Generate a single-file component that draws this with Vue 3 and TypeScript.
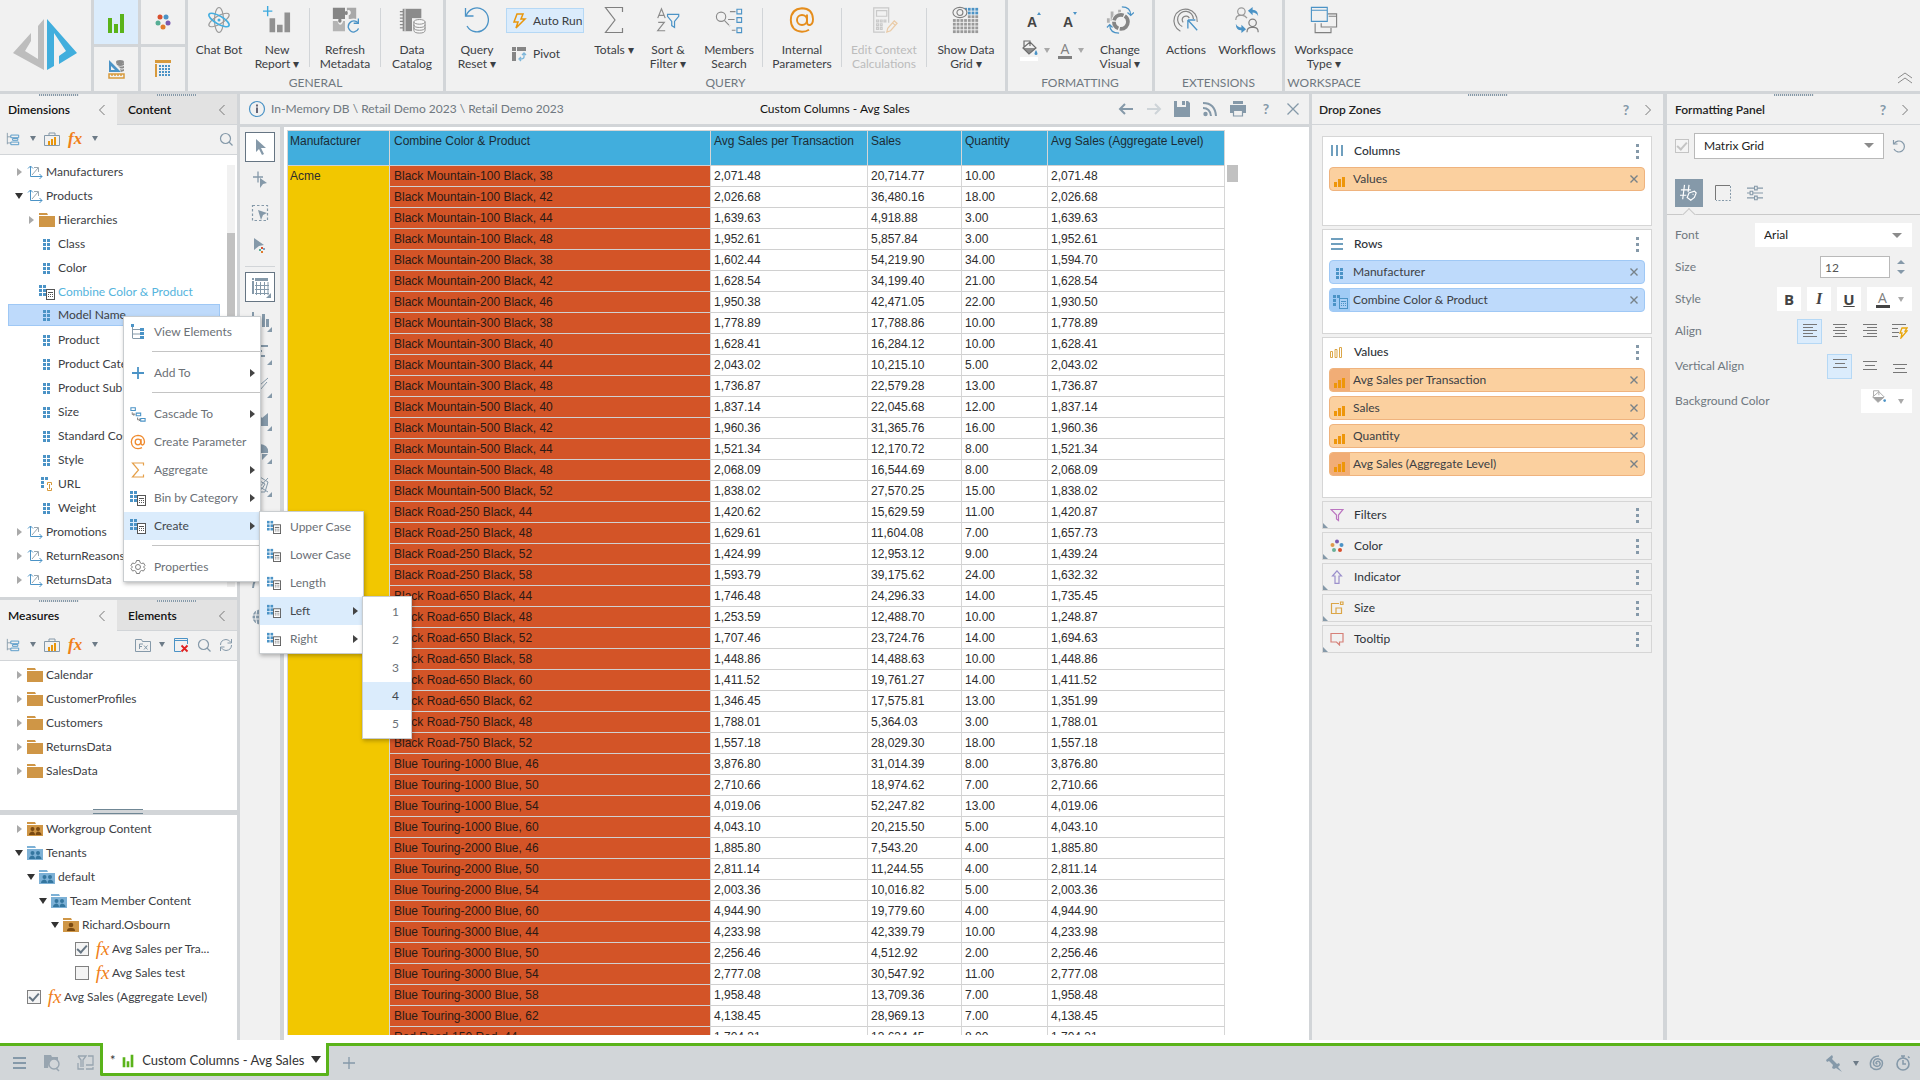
<script setup lang="ts">
import { h, ref, type FunctionalComponent } from 'vue'

const G = '#8599a9'
const B = '#4b93c6'
const D = '#8c8c8c'

const cells = (x: number, y: number, c: number, r: number, s: number, p: number, f: string) => {
  let out = ''
  for (let i = 0; i < c; i++) for (let j = 0; j < r; j++) out += `<rect x="${x + i * p}" y="${y + j * p}" width="${s}" height="${s}" fill="${f}"/>`
  return out
}
const lines = (list: number[][], c: string) =>
  `<path stroke="${c}" d="${list.map(([x1, x2, y]) => `M${x1} ${y}H${x2}`).join('')}"/>`
const people = (c: string) =>
  `<g fill="${c}"><circle cx="5.500" cy="8" r="2"/><circle cx="11" cy="8" r="2"/><path d="M2 14q0-3 3.500-3.500Q8 11 8 14ZM8.500 14q0-3 2.500-3.500 3.500.5 3.500 3.500Z"/></g>`
const calc = (c: string, bg: string) =>
  `<rect x="7.500" y="5.500" width="8" height="10" fill="${bg}" stroke="${c}"/><path stroke="${c}" d="M9 8.500h5"/>` + cells(9, 10, 3, 2, 1, 2, c)
const dim = cells(4, 3, 2, 3, 3, 4, B)
const folder = (c: string) => `<path fill="${c}" d="M0 1h8l1 2H0ZM0 4h16v11H0Z"/>`
const bars = (c: string) => `<path fill="${c}" d="M1 9h3v5H1ZM5 6h3v8H5ZM9 4h3v10H9Z"/>`

const icons: Record<string, [number, string]> = {
  report: [24, `<path fill="#5ab31a" d="M4 8h4v15H4ZM10 14h4v9h-4ZM16 4h4v19h-4Z"/>`],
  dots5: [24, `<circle cx="9" cy="7" r="2.500" fill="#d9502e"/><circle cx="15" cy="7" r="2.500" fill="${B}"/><circle cx="7" cy="13" r="2.500" fill="#57ae95"/><circle cx="17" cy="13" r="2.500" fill="#7a58b0"/><circle cx="12" cy="17" r="2.500" fill="#e07c2c"/>`],
  model: [24, `<path fill="${B}" fill-rule="evenodd" d="M5 3L17 15H5ZM7 9v4h4Z"/><g fill="#8b8b8b"><ellipse cx="16" cy="5" rx="4" ry="2"/><path d="M12 6q4 2 8 0v2q-4 2-7 0ZM14 9q3 1 6 0v2q-3 1-4 0ZM16 12q2 1 4 0v2l-3 1Z"/></g><path fill="#f1f1f1" stroke="#d79a3c" stroke-width="1.500" d="M5 17h15v4H5ZM8 17v2M11 17v2M14 17v2M17 17v2"/>`],
  tabular: [24, `<path fill="#d79a3c" d="M4 3h16v3H4ZM4 7h2v13H4Z"/>` + cells(8, 8, 4, 4, 2, 3, B)],
  atom: [28, `<g fill="none" stroke="#9a9a9a" stroke-width="1.200"><ellipse cx="14" cy="14" rx="4.500" ry="12.500"/><ellipse cx="14" cy="14" rx="4" ry="11.500" transform="rotate(60 14 14)"/><ellipse cx="14" cy="14" rx="4" ry="11.500" transform="rotate(-60 14 14)" stroke="#45aee0" stroke-width="1.600"/></g><circle cx="14" cy="14" r="1.500" fill="#45aee0"/>`],
  newrep: [30, `<path fill="#919191" d="M7 13h6v15H7ZM15 20h6v8h-6ZM23 7h6v21h-6Z"/><path stroke="#3da9de" stroke-width="1.500" d="M0 5.500h10M5 0v11"/>`],
  refmeta: [30, `<path fill="#858585" d="M2 2h13v4q3-2 3 1.500T15 9v5h-4q1 4-1.500 4T8 14H2Z"/><path fill="#a8a8a8" d="M17 2h10v12h-8v-4q3-1 2-4t-4-1Z"/><path fill="#b4b4b4" d="M2 16h5q1 4 3 4t3-4h2v11H2Z"/><g fill="none" stroke="#f1f1f1" stroke-width="5"><circle cx="24" cy="22" r="6"/></g><g fill="none" stroke="${B}" stroke-width="1.400"><path d="M29 18q-3-3-7-1.500-4 2.500-3.500 6.500 2 5 6 5 4-1 5-4"/><path d="M29.300 13.500v5h-5"/></g>`],
  catalog: [30, `<path fill="#8b8b8b" d="M5 3h20v24H5Z"/><path fill="none" stroke="#f1f1f1" d="M7.500 3v24"/><path stroke="#8b8b8b" stroke-width="1.300" d="M2 6h4M2 9.500h4M2 13h4M2 16.500h4M2 20h4M2 23.500h4"/><path fill="#f1f1f1" d="M15 13h16v17H15Z"/><g fill="#f7f7f7" stroke="#8b8b8b"><path d="M17 17v9q0 3 6 3t6-3v-9"/><ellipse cx="23" cy="17" rx="6" ry="2.500"/><path fill="none" d="M17 20q0 3 6 3t6-3M17 23q0 3 6 3t6-3"/></g>`],
  reset: [28, `<g fill="none" stroke="${B}" stroke-width="1.300"><path d="M2.500 2v8h8"/><path d="M3 10A11.500 12 0 1 1 4 20"/></g>`],
  bolt: [16, `<path fill="none" stroke="#e9960b" stroke-width="1.500" d="M6 1h6l-2 5h4L5 15l2-6H3Z"/>`],
  pivot: [16, `<path fill="#858585" d="M1 1h4v4H1ZM6 1h9v4H6ZM1 6h4v9H1Z"/><path fill="none" stroke="#7db6da" stroke-width="1.300" d="M13 7v4q0 2-4 2M11 9l2-2 2 2M10 11l-2 2 2 2"/>`],
  sigma: [28, `<path fill="none" stroke="#808080" stroke-width="1.200" d="M22.500 6V1.500H5.500L15 14 5.500 26.500h17v-4.500"/>`],
  sort: [30, `<g fill="none" stroke="#8b8b8b" stroke-width="1.300"><path d="M4 13L8 3l4 10M5.500 10h5M4.500 17.500H11L4 26.500h8"/></g><path fill="none" stroke="${B}" stroke-width="1.300" d="M14.500 9h12v2l-4.500 5.500V23l-3-2v-4.500L14.500 11Z"/>`],
  members: [30, `<g fill="none" stroke="#8b8b8b" stroke-width="1.200"><circle cx="6.500" cy="11.500" r="5"/><path d="M10 15.500l6 6M16 6h6M14 14.500h8M18 26h4" stroke-dasharray="7 1"/></g><g fill="none" stroke="${B}" stroke-width="1.200"><path d="M23.500 3.500h5v5h-5ZM23.500 12.500h5v5h-5ZM23.500 23.500h5v5h-5Z"/></g>`],
  at: [28, `<g fill="none" stroke="#e58d1c" stroke-width="1.900"><circle cx="14" cy="14" r="5"/><path d="M19 8.500v7q0 4 3 3.500 3-1 3-6Q24.500 2.500 14 2.200 3 3 2.800 14 3 25 14 25.800q4 0 7-2"/></g>`],
  calcedit: [30, `<g fill="none" stroke="#c9c9c9" stroke-width="1.300"><path d="M20 18V2H4v26h12M7 5h11v6H7Z"/><path d="M7 15h2v2H7ZM11 15h2v2h-2ZM15 15h2v2h-2ZM7 19h2v2H7ZM11 19h2v2h-2ZM7 23h2v2H7ZM11 23h2v2h-2Z"/><path stroke="#eacba7" d="M18 28l1-4 7-8 3 2.500-7 8ZM24 18l3 2.500"/></g>`],
  datagrid: [30, cells(13, 2, 4, 2, 3, 4, B) + cells(1, 14, 7, 4, 3, 4, '#9a9a9a') + cells(17, 10, 3, 1, 3, 4, '#9a9a9a') + `<g fill="#f1f1f1" stroke="#808080" stroke-width="1.200"><ellipse cx="8.500" cy="7" rx="7.500" ry="5.500"/><circle cx="8.500" cy="7" r="3.200"/></g>`],
  bucket: [18, `<path fill="#8b8b8b" d="M3 9h13l-7 6Z"/><path fill="none" stroke="#6d6d6d" stroke-width="1.200" d="M3 9l7-6 6 6-7 6ZM4 8V2h6v5"/><path fill="${B}" d="M16 11q3 5 0 5t0-5Z"/>`],
  bucketS: [18, `<path fill="#a3a3a3" d="M3 9h13l-7 6Z"/><path fill="none" stroke="#a3a3a3" d="M3 9l7-6 6 6-7 6ZM4 8V2h6v5"/><circle cx="16.500" cy="13" r="1.500" fill="${B}"/>`],
  visual: [30, `<path fill="#b1b1b1" d="M1 13h3v5H1ZM5 6h3v10H5ZM9 9h3v5H9ZM13 4h3v6h-3Z"/><g fill="none"><circle cx="16" cy="17" r="7.500" stroke="#f1f1f1" stroke-width="6"/><circle cx="16" cy="17" r="7.500" stroke="#858585" stroke-width="4" stroke-dasharray="13 1.500 9 1.500"/><path stroke="${B}" stroke-width="1.300" d="M17 1q9.500 0 9.500 9M23 7l3.500 3L30 7M4 20q0 9 10 9M1 23l3-3 3 3"/></g>`],
  actions: [30, `<g fill="none" stroke="#858585" stroke-width="1.300"><path d="M9 27A12.500 12.500 0 1 1 27 17"/><path d="M11 22A8.500 8.500 0 1 1 23 14"/><path d="M12 17.500A4 4 0 1 1 18.500 13"/></g><path fill="none" stroke="${B}" stroke-width="1.400" d="M17 15v9M17 15h8M17 15l10 11"/>`],
  flows: [30, `<g fill="none" stroke="#9a9a9a" stroke-width="1.300"><circle cx="9" cy="6" r="4"/><path d="M3 15q0-5 5-5h2q3 0 5 3"/><g stroke="#808080"><circle cx="21" cy="18" r="4"/><path d="M15 28q0-5 5-5h2q5 0 5 5"/></g></g><path fill="${B}" d="M16 5l5-4v3q6 0 6 7-2-4-6-4v3ZM14 25l-5 4v-3q-6 0-6-7 2 4 6 4v-3Z"/>`],
  wspace: [30, `<g fill="none" stroke="#808080" stroke-width="1.200"><path d="M19 8.500h9.500v14H12v-4M20 11h8M5.500 18.500v10h17v-5"/></g><path fill="none" stroke="${B}" stroke-width="1.200" d="M1.500 1.500h17v15h-17ZM1.500 4.500h17"/>`],
  chevUp: [16, `<path fill="none" stroke="${D}" d="M1 8l7-5 7 5M1 13l7-5 7 5"/>`],
  left: [14, `<path fill="none" stroke="#777" d="M9.500 2L4.500 7l5 5"/>`],
  right: [14, `<path fill="none" stroke="#777" d="M4.500 2l5 5-5 5"/>`],
  hier: [16, `<g fill="none" stroke="${G}"><path d="M1.500 1v13M1.500 5.500h4M1.500 12.500h4"/><g stroke="${B}"><path d="M5.500 3.500h9v3h-9ZM5.500 11.500h9v3h-9ZM7.500 7.500h6v2h-6Z"/></g></g>`],
  brief: [16, `<path fill="none" stroke="${G}" d="M.5 4.500h15v10H.5ZM5 4V2h6v2"/><path fill="#e9960b" d="M4 10h2v4H4ZM7 8h2v6H7ZM10 6h2v8h-2Z"/>`],
  search: [14, `<circle cx="6.500" cy="6.500" r="5" fill="none" stroke="${G}" stroke-width="1.200"/><path stroke="${G}" stroke-width="1.200" d="M10 10l3.500 3.500"/>`],
  cycle: [14, `<g fill="none" stroke="${G}"><path d="M1.500 7q0-5 5.500-5.500 3 0 5 3M12.500 7q0 5-5.500 5.500-3 0-5-3M12.500 1v4h-4M1.500 13V9h4"/></g>`],
  fxfold: [16, `<path fill="none" stroke="${G}" d="M.5 14.500v-12h6l1 2h8v10Z"/><path fill="none" stroke="${G}" d="M4.500 12V7H8M4.500 9.500H7M9 8.500l3.500 4M12.500 8.500l-3.500 4"/>`],
  boxx: [16, `<path fill="none" stroke="${B}" d="M8 14.500H1.500v-13h13V7M1.500 3.500h13"/><path stroke="#e02020" stroke-width="1.800" d="M8.500 8.500l6 6M14.500 8.500l-6 6"/>`],
  axes: [16, `<g fill="none" stroke="${B}"><path d="M3.500 2v10.500H15M1 4.500L3.500 2 6 4.500M12.500 10l2.500 2.500-2.500 2.500"/></g><path fill="none" stroke="#9aa7b0" d="M5 11l6-7M7 3.500h4.500V8"/>`],
  folder: [16, folder('#cf9646')],
  workgroup: [16, folder('#cf9646') + people('#7a4a12')],
  tenant: [16, folder('#7db1d6') + people('#34769f')],
  user: [16, folder('#cf9646') + `<g fill="#7a4a12"><circle cx="8" cy="8" r="2.300"/><path d="M4 14q0-3 3-3h2q3 0 3 3Z"/></g>`],
  dim: [16, dim],
  dimcalc: [16, cells(0, 1, 2, 1, 3, 4, B) + cells(0, 5, 2, 2, 3, 4, B) + calc('#555', '#fff')],
  dimlink: [16, cells(2, 1, 2, 1, 3, 4, B) + cells(2, 5, 1, 2, 3, 4, B) + `<path fill="none" stroke="#d79a3c" d="M8.500 9V6.500h4V9M8.500 12v2.500h4V12M10.500 8v5"/>`],
  elements: [16, `<path fill="none" stroke="${G}" d="M2.500 2v12M2.500 5.500h8M2.500 10h8M2.500 14.500h8"/><path fill="${B}" d="M1 0h3v3H1ZM10 4h4v3h-4ZM10 8h4v3h-4ZM10 12h4v3h-4Z"/>`],
  plus: [16, `<path stroke="${B}" stroke-width="1.800" d="M2 8h12M8 2v12"/>`],
  cascade: [18, `<g fill="none" stroke="${B}" stroke-width="1.200"><path d="M1 2h5v3H1ZM7 8h5v3H7ZM12 14h5v3h-5Z"/></g><path fill="none" stroke="#777" d="M2.500 7v2.500H5M4 8l1.500 1.500L4 11M8.500 13v2.500H11M10 14l1.500 1.500L10 17"/>`],
  atS: [16, `<g fill="none" stroke="#ef8a2e" stroke-width="1.300"><circle cx="8" cy="8" r="2.800"/><path d="M11 5v4q0 2 1.500 2T14.500 8Q14 1.500 8 1.300 1.500 2 1.300 8 2 14.500 8 14.700q2 0 4-1"/></g>`],
  sigmaS: [16, `<path fill="none" stroke="#e5a04a" stroke-width="1.200" d="M13.500 3.500V1H2.500l6 7-6 7h11v-2.500"/>`],
  gear: [16, `<g fill="none" stroke="#808080"><circle cx="8" cy="8" r="2.500"/><path d="M6.500 1.500h3l.5 2 1.500 1 2-.5 1.500 2.500L13.500 8l1.500 1.500-1.500 2.500-2-.5-1.500 1-.5 2h-3l-.5-2-1.500-1-2 .5L1 9.500 2.500 8 1 6.500 2.500 4l2 .5 1.500-1Z"/></g>`],
  info: [18, `<circle cx="9" cy="9" r="7.500" fill="none" stroke="${B}" stroke-width="1.200"/><path fill="#667" d="M8 7.500h2V13H8ZM8 4.500h2v2H8Z"/>`],
  back: [16, `<path fill="none" stroke="${G}" stroke-width="2" d="M15 8H2M7 3L2 8l5 5"/>`],
  fwd: [16, `<path fill="none" stroke="#ced4d8" stroke-width="2" d="M1 8h13M9 3l5 5-5 5"/>`],
  save: [16, `<path fill="${G}" d="M0 0h3v6h9V0h2l2 2v14H0Z"/><path fill="${G}" d="M8 0h3v4H8Z"/>`],
  rss: [16, `<circle cx="3.500" cy="13" r="2.200" fill="${G}"/><path fill="none" stroke="${G}" stroke-width="2" d="M1 7q7 0 8 8M1 2q12 0 13 13"/>`],
  print: [16, `<path fill="${G}" d="M3 0h10v3H3ZM0 4h16v8h-3V9H3v3H0Z"/><path fill="none" stroke="${G}" stroke-width="1.200" d="M3.500 9.500h9v5.500h-9Z"/>`],
  close: [14, `<path stroke="${G}" stroke-width="1.300" d="M1.500 1.500l11 11M12.500 1.500l-11 11"/>`],
  cursor: [20, `<path fill="${G}" d="M6 2v13l3-3 3 6 2-1-3-6h5Z"/>`],
  addcur: [20, `<path stroke="${G}" stroke-width="1.300" d="M3 7h10M8 1.500v11"/><path fill="${G}" d="M10 8l7 5-4 1-3 4Z"/>`],
  lasso: [20, `<path fill="none" stroke="${G}" stroke-width="1.200" stroke-dasharray="2.500 2" d="M2.500 2.500h15v15h-15Z"/><path fill="${G}" d="M8 7l9 3-4 2-2 5Z"/>`],
  colcur: [20, `<path fill="${G}" d="M4 2l10 7-5 1-5 4Z"/><path fill="#d9502e" d="M11 11h2v2h-2Z"/><path fill="#57ae95" d="M9 13h2v2H9Z"/><path fill="#7f9fc0" d="M13 12h2v2h-2Z"/><path fill="#e07c2c" d="M11 15h2v2h-2Z"/>`],
  gridT: [20, `<path fill="${G}" d="M5 1h13v3H5ZM2 4h2v13H2ZM2 1h2v2H2Z"/><path stroke="${G}" d="M5 8.500h14M5 12.500h14M5 16.500h14M6.500 5v13M10.500 5v13M14.500 5v13M18 5v13"/>`],
  colT: [20, `<path fill="${G}" d="M2 2h2v15H2ZM7 8h2v9H7ZM12 4h3v13h-3ZM16 9h3v8h-3Z"/>`],
  barT: [20, `<path fill="${G}" d="M2 2h16v2H2ZM2 7h10v2H2ZM2 12h13v2H2Z"/>`],
  lineT: [20, `<path fill="none" stroke="${G}" d="M2 12l8-3 8-7M2 16l8-2 7-8"/>`],
  areaT: [20, `<path fill="${G}" d="M2 17V8l6-4 4 5 6-5v13Z"/>`],
  pieT: [20, `<path fill="${G}" d="M10 2a8 8 0 1 0 0 16V11h8q1-8-8-9ZM12 12h6l-6 6Z"/>`],
  radarT: [20, `<path fill="none" stroke="${G}" d="M10 2l8 5-3 10H5L2 7ZM10 6l5 3-3 5-6-1ZM2 7l16 10M18 3L5 17"/>`],
  globeT: [20, `<circle cx="10" cy="10" r="7.500" fill="${G}"/><path fill="none" stroke="#f1f1f1" d="M2 8h16M2 12h16M7 2q-3 8 0 16M13 2q3 8 0 16"/>`],
  curveT: [20, `<path fill="none" stroke="${G}" stroke-width="2" d="M3 14q1-9 5-9t5 9"/>`],
  zcols: [14, `<path fill="#6f9fbe" d="M1 1h2v11H1ZM6 1h2v11H6ZM11 1h2v11h-2Z"/>`],
  zrows: [14, `<path fill="#6f9fbe" d="M1 1h12v2H1ZM1 6h12v2H1ZM1 11h12v2H1Z"/>`],
  zvals: [14, `<path fill="none" stroke="#dba648" d="M.5 6.500h2v6h-2ZM5 4.500h2v8H5ZM9.500 2.500h2v10h-2Z"/>`],
  zfilter: [14, `<path fill="none" stroke="#bb75c0" stroke-width="1.200" d="M1 1.500h12L8.500 7v5.500L6.500 11V7Z"/>`],
  zcolor: [14, `<circle cx="7" cy="2.500" r="2" fill="#7a58b0"/><circle cx="2.500" cy="6" r="2" fill="#e09a4c"/><circle cx="11.500" cy="6" r="2" fill="${B}"/><circle cx="4" cy="11" r="2" fill="#6bb09a"/><circle cx="10" cy="11" r="2" fill="#d9502e"/>`],
  zind: [14, `<path fill="none" stroke="#9b90cc" stroke-width="1.200" d="M7 .8L11.500 6H9v7.300H5V6H2.500Z"/>`],
  zsize: [14, `<path fill="none" stroke="#dba648" stroke-width="1.200" d="M9 2.500H1.500v10h10V7H6v5.500M10.500 1h2.500v2.500h-2.500Z"/>`],
  ztip: [14, `<path fill="none" stroke="#d68078" stroke-width="1.200" d="M1 1.500h12v8.500H9.500V13L6.500 10H1Z"/>`],
  bars: [14, bars('#ee960a')],
  x: [10, `<path stroke="#788288" stroke-width="1.400" d="M1.500 1.500l7 7M8.500 1.500l-7 7"/>`],
  chipcalc: [16, cells(1, 2, 2, 1, 3, 4, B) + cells(1, 6, 1, 2, 3, 4, B) + calc(B, '#a9cff5')],
  hashtag: [20, `<g fill="none" stroke="#fff" stroke-width="1.300"><path d="M1 6.500h11M0 12.500h7M5 1L3 17M10 1L9 9"/><path d="M8 15l2-5 6-2 2 2-2 5-4 3ZM14 11.500h1"/></g>`],
  border: [16, `<path fill="none" stroke="${G}" stroke-dasharray="2 1.500" d="M15.500 1v14.500H1"/><path fill="none" stroke="#777" d="M.5 15V.5H15"/>`],
  sliders: [18, `<path fill="none" stroke="${G}" stroke-width="1.200" d="M0 3.500h8M12 3.500h6M8.500 1.500h3v4h-3ZM0 9h3.500M7 9h11M3.500 7h3v4h-3ZM0 14.500h8M12 14.500h6M8.500 12.500h3v4h-3Z"/>`],
  undoS: [14, `<g fill="none" stroke="${G}" stroke-width="1.200"><path d="M1.500 1v4h4"/><path d="M2 5a5.500 5.500 0 1 1 0 5"/></g>`],
  alL: [16, lines([[1, 15, 1.5], [1, 11, 4.5], [1, 15, 7.5], [1, 11, 10.5], [1, 15, 13.5]], '#777')],
  alC: [16, lines([[1, 15, 1.5], [3, 13, 4.5], [1, 15, 7.5], [3, 13, 10.5], [1, 15, 13.5]], '#777')],
  alR: [16, lines([[1, 15, 1.5], [5, 15, 4.5], [1, 15, 7.5], [5, 15, 10.5], [1, 15, 13.5]], '#777')],
  alA: [16, lines([[0, 14, 1.5], [0, 6, 5.5], [0, 7, 9.5], [0, 6, 13.5]], '#777') + `<path fill="none" stroke="#e9a60b" stroke-width="1.300" d="M10 5h5l-2 3h2l-6 7 1-5H8Z"/>`],
  vaT: [16, lines([[1, 15, 1.5], [3, 13, 5.5], [1, 15, 9.5]], '#777')],
  vaM: [16, lines([[1, 15, 3.5], [3, 13, 7.5], [1, 15, 11.5]], '#777')],
  vaB: [16, lines([[1, 15, 6.5], [3, 13, 10.5], [1, 15, 14.5]], '#777')],
  burger: [14, `<path fill="${G}" d="M0 1h13v2H0ZM0 6h13v2H0ZM0 11h13v2H0Z"/>`],
  find: [18, `<path fill="#98a5b0" d="M1 1h7l1 2h6v3H7l-2 8H1Z"/><circle cx="11" cy="10" r="5" fill="#d2d6d9" stroke="#98a5b0" stroke-width="1.400"/><path stroke="#98a5b0" stroke-width="1.500" d="M13 14l3 3"/>`],
  panes: [18, `<path fill="none" stroke="#98a5b0" stroke-width="1.300" d="M1 2h8L6 6v7M1 2l3 4v7M11 2h5v9H9M1 9v6h6M9 15h7v-2"/>`],
  add: [14, `<path stroke="${G}" stroke-width="1.300" d="M1 7h12M7 1v12"/>`],
  pin: [18, `<path fill="${G}" d="M1 6l6-5 1 2-1 2 5 5 2-1 1 2-2 2 4 5-6-4-2 1-2-1 1-3-4-4-2 1Z"/>`],
  spiral: [16, `<path fill="none" stroke="${G}" stroke-width="1.500" d="M8.500 8.500q-1.500 1-1.500-1 1-2 3-1 2 2 .5 4-2.500 2-5.500-.5-1.500-3.500 1-5.500Q10 2.500 13 6q1.500 4.500-2 7.500-5 2.500-9-1.500-2-6 2.500-9.500Q7 1 10 1"/>`],
  timer: [16, `<circle cx="8" cy="9" r="6" fill="none" stroke="${G}" stroke-width="1.600"/><path fill="none" stroke="${G}" stroke-width="1.500" d="M8 5v4h3M6 1h4M8 1v2M13 1.500l1.500 1.500"/>`],
}

const Ico: FunctionalComponent<{ n: string; s?: number | string }> = (p) => {
  const [box, body] = icons[p.n]
  const s = p.s ?? box
  return h('svg', { class: 'ico', width: s, height: s, viewBox: `0 0 ${box} ${box}`, 'aria-hidden': 'true', innerHTML: body })
}
Ico.props = ['n', 's']

interface TreeNode { t: string; l: number; i: string; a?: 'c' | 'o'; cls?: string; check?: boolean }
const dims: TreeNode[] = [
  { t: 'Manufacturers', l: 0, i: 'axes', a: 'c' },
  { t: 'Products', l: 0, i: 'axes', a: 'o' },
  { t: 'Hierarchies', l: 1, i: 'folder', a: 'c' },
  { t: 'Class', l: 1, i: 'dim' },
  { t: 'Color', l: 1, i: 'dim' },
  { t: 'Combine Color & Product', l: 1, i: 'dimcalc', cls: 'custom' },
  { t: 'Model Name', l: 1, i: 'dim', cls: 'sel' },
  { t: 'Product', l: 1, i: 'dim' },
  { t: 'Product Category', l: 1, i: 'dim' },
  { t: 'Product Sub Category', l: 1, i: 'dim' },
  { t: 'Size', l: 1, i: 'dim' },
  { t: 'Standard Cost', l: 1, i: 'dim' },
  { t: 'Style', l: 1, i: 'dim' },
  { t: 'URL', l: 1, i: 'dimlink' },
  { t: 'Weight', l: 1, i: 'dim' },
  { t: 'Promotions', l: 0, i: 'axes', a: 'c' },
  { t: 'ReturnReasons', l: 0, i: 'axes', a: 'c' },
  { t: 'ReturnsData', l: 0, i: 'axes', a: 'c' },
]
const measures: TreeNode[] = ['Calendar', 'CustomerProfiles', 'Customers', 'ReturnsData', 'SalesData'].map((t) => ({ t, l: 0, i: 'folder', a: 'c' as const }))
const content: TreeNode[] = [
  { t: 'Workgroup Content', l: 0, i: 'workgroup', a: 'c' },
  { t: 'Tenants', l: 0, i: 'tenant', a: 'o' },
  { t: 'default', l: 1, i: 'tenant', a: 'o' },
  { t: 'Team Member Content', l: 2, i: 'tenant', a: 'o' },
  { t: 'Richard.Osbourn', l: 3, i: 'user', a: 'o' },
  { t: 'Avg Sales per Tra...', l: 4, i: 'fx', check: true },
  { t: 'Avg Sales test', l: 4, i: 'fx', check: false },
  { t: 'Avg Sales (Aggregate Level)', l: 0, i: 'fx', check: true },
]
const trees = { dims, measures }

const heads = ['Manufacturer', 'Combine Color & Product', 'Avg Sales per Transaction', 'Sales', 'Quantity', 'Avg Sales (Aggregate Level)']
const rows = `Black Mountain-100 Black, 38|2,071.48|20,714.77|10.00|2,071.48
Black Mountain-100 Black, 42|2,026.68|36,480.16|18.00|2,026.68
Black Mountain-100 Black, 44|1,639.63|4,918.88|3.00|1,639.63
Black Mountain-100 Black, 48|1,952.61|5,857.84|3.00|1,952.61
Black Mountain-200 Black, 38|1,602.44|54,219.90|34.00|1,594.70
Black Mountain-200 Black, 42|1,628.54|34,199.40|21.00|1,628.54
Black Mountain-200 Black, 46|1,950.38|42,471.05|22.00|1,930.50
Black Mountain-300 Black, 38|1,778.89|17,788.86|10.00|1,778.89
Black Mountain-300 Black, 40|1,628.41|16,284.12|10.00|1,628.41
Black Mountain-300 Black, 44|2,043.02|10,215.10|5.00|2,043.02
Black Mountain-300 Black, 48|1,736.87|22,579.28|13.00|1,736.87
Black Mountain-500 Black, 40|1,837.14|22,045.68|12.00|1,837.14
Black Mountain-500 Black, 42|1,960.36|31,365.76|16.00|1,960.36
Black Mountain-500 Black, 44|1,521.34|12,170.72|8.00|1,521.34
Black Mountain-500 Black, 48|2,068.09|16,544.69|8.00|2,068.09
Black Mountain-500 Black, 52|1,838.02|27,570.25|15.00|1,838.02
Black Road-250 Black, 44|1,420.62|15,629.59|11.00|1,420.87
Black Road-250 Black, 48|1,629.61|11,604.08|7.00|1,657.73
Black Road-250 Black, 52|1,424.99|12,953.12|9.00|1,439.24
Black Road-250 Black, 58|1,593.79|39,175.62|24.00|1,632.32
Black Road-650 Black, 44|1,746.48|24,296.33|14.00|1,735.45
Black Road-650 Black, 48|1,253.59|12,488.70|10.00|1,248.87
Black Road-650 Black, 52|1,707.46|23,724.76|14.00|1,694.63
Black Road-650 Black, 58|1,448.86|14,488.63|10.00|1,448.86
Black Road-650 Black, 60|1,411.52|19,761.27|14.00|1,411.52
Black Road-650 Black, 62|1,346.45|17,575.81|13.00|1,351.99
Black Road-750 Black, 48|1,788.01|5,364.03|3.00|1,788.01
Black Road-750 Black, 52|1,557.18|28,029.30|18.00|1,557.18
Blue Touring-1000 Blue, 46|3,876.80|31,014.39|8.00|3,876.80
Blue Touring-1000 Blue, 50|2,710.66|18,974.62|7.00|2,710.66
Blue Touring-1000 Blue, 54|4,019.06|52,247.82|13.00|4,019.06
Blue Touring-1000 Blue, 60|4,043.10|20,215.50|5.00|4,043.10
Blue Touring-2000 Blue, 46|1,885.80|7,543.20|4.00|1,885.80
Blue Touring-2000 Blue, 50|2,811.14|11,244.55|4.00|2,811.14
Blue Touring-2000 Blue, 54|2,003.36|10,016.82|5.00|2,003.36
Blue Touring-2000 Blue, 60|4,944.90|19,779.60|4.00|4,944.90
Blue Touring-3000 Blue, 44|4,233.98|42,339.79|10.00|4,233.98
Blue Touring-3000 Blue, 50|2,256.46|4,512.92|2.00|2,256.46
Blue Touring-3000 Blue, 54|2,777.08|30,547.92|11.00|2,777.08
Blue Touring-3000 Blue, 58|1,958.48|13,709.36|7.00|1,958.48
Blue Touring-3000 Blue, 62|4,138.45|28,969.13|7.00|4,138.45
Red Road-150 Red, 44|1,704.31|13,634.45|8.00|1,704.31`.split('\n').map((r) => r.split('|'))

const tools = ['cursor', 'addcur', 'lasso', 'colcur', '', 'gridT', 'colT', 'barT', 'lineT', 'areaT', 'pieT', 'radarT', 'colT', 'barT', 'curveT', 'globeT']

interface Chip { t: string; i: string; m?: boolean }
interface Zone { t: string; i: string; kind: string; chips: Chip[] }
const zones: Zone[] = [
  { t: 'Columns', i: 'zcols', kind: 'orange', chips: [{ t: 'Values', i: 'bars' }] },
  { t: 'Rows', i: 'zrows', kind: 'blue', chips: [{ t: 'Manufacturer', i: 'dim' }, { t: 'Combine Color & Product', i: 'chipcalc', m: true }] },
  { t: 'Values', i: 'zvals', kind: 'orange', chips: [{ t: 'Avg Sales per Transaction', i: 'bars', m: true }, { t: 'Sales', i: 'bars' }, { t: 'Quantity', i: 'bars' }, { t: 'Avg Sales (Aggregate Level)', i: 'bars', m: true }] },
]
const folded = [['Filters', 'zfilter'], ['Color', 'zcolor'], ['Indicator', 'zind'], ['Size', 'zsize'], ['Tooltip', 'ztip']]

interface MenuItem { t: string; i: string; sub?: boolean; on?: boolean; sep?: boolean }
const menu: MenuItem[] = [
  { t: 'View Elements', i: 'elements', sep: true },
  { t: 'Add To', i: 'plus', sub: true, sep: true },
  { t: 'Cascade To', i: 'cascade', sub: true },
  { t: 'Create Parameter', i: 'atS' },
  { t: 'Aggregate', i: 'sigmaS', sub: true },
  { t: 'Bin by Category', i: 'dimcalc', sub: true },
  { t: 'Create', i: 'dimcalc', sub: true, on: true, sep: true },
  { t: 'Properties', i: 'gear' },
]
const submenu: MenuItem[] = [
  { t: 'Upper Case', i: 'dimcalc' }, { t: 'Lower Case', i: 'dimcalc' }, { t: 'Length', i: 'dimcalc' },
  { t: 'Left', i: 'dimcalc', sub: true, on: true }, { t: 'Right', i: 'dimcalc', sub: true },
]
const fontSize = ref('12')
</script>

<template>
  <div class="app">
    <header class="ribbon">
      <div class="logo">
        <svg width="91" height="91" viewBox="0 0 91 91" role="img" aria-label="Logo">
          <path fill="#bdbdbd" d="M44 19V70L13 53L31 33V41L25 51L38 59V26Z" />
          <path fill="#41aedd" d="M47 19L77 53L59 64V56L66 51L54 33V66L47 70Z" />
        </svg>
      </div>
      <nav class="apps">
        <button class="on" aria-label="Discover"><Ico n="report" /></button>
        <button aria-label="Present"><Ico n="dots5" /></button>
        <button aria-label="Model"><Ico n="model" /></button>
        <button aria-label="Formulate"><Ico n="tabular" /></button>
      </nav>
      <section class="group pad">
        <div class="items">
          <button class="w52"><Ico n="atom" :s="28" />Chat Bot</button>
          <button class="w64"><Ico n="newrep" :s="28" />New<br />Report ▾</button>
          <i class="sep"></i>
          <button class="w70"><Ico n="refmeta" :s="28" />Refresh<br />Metadata</button>
          <i class="sep"></i>
          <button class="w62"><Ico n="catalog" :s="28" />Data<br />Catalog</button>
        </div>
        <h2>GENERAL</h2>
      </section>
      <section class="group pad">
        <div class="items">
          <button class="w52"><Ico n="reset" :s="28" />Query<br />Reset ▾</button>
          <div class="pair">
            <button class="run"><Ico n="bolt" />Auto Run</button>
            <button class="pivot"><Ico n="pivot" />Pivot</button>
          </div>
          <button class="w52"><Ico n="sigma" :s="28" />Totals ▾</button>
          <button class="w56"><Ico n="sort" :s="28" />Sort &amp;<br />Filter ▾</button>
          <button class="w66"><Ico n="members" :s="28" />Members<br />Search</button>
          <i class="sep"></i>
          <button class="w78"><Ico n="at" :s="28" />Internal<br />Parameters</button>
          <i class="sep"></i>
          <button class="w84" disabled><Ico n="calcedit" :s="28" />Edit Context<br />Calculations</button>
          <i class="sep"></i>
          <button class="w78"><Ico n="datagrid" :s="28" />Show Data<br />Grid ▾</button>
        </div>
        <h2>QUERY</h2>
      </section>
      <section class="group">
        <div class="items">
          <div class="fonts">
            <button aria-label="Grow font"><b>A</b><i class="up"></i></button>
            <button aria-label="Shrink font"><b>A</b><i class="down"></i></button>
            <button aria-label="Fill" class="fill"><Ico n="bucket" /><i class="caret pale"></i></button>
            <button aria-label="Font color" class="fc"><span>A</span><i class="caret pale"></i></button>
          </div>
          <button class="w64"><Ico n="visual" :s="28" />Change<br />Visual ▾</button>
        </div>
        <h2>FORMATTING</h2>
      </section>
      <section class="group pad">
        <div class="items">
          <button class="w52"><Ico n="actions" :s="28" />Actions</button>
          <button class="w70"><Ico n="flows" :s="28" />Workflows</button>
        </div>
        <h2>EXTENSIONS</h2>
      </section>
      <section class="group last">
        <div class="items"><button class="w78"><Ico n="wspace" :s="28" />Workspace<br />Type ▾</button></div>
        <h2>WORKSPACE</h2>
      </section>
      <button class="fold" aria-label="Collapse ribbon"><Ico n="chevUp" /></button>
    </header>

    <main class="work">
      <aside class="side">
        <section v-for="(k, p) in (['dims', 'measures'] as const)" :key="k" class="pane" :class="k">
          <div class="tabs">
            <button class="tab on"><i class="grip"></i>{{ p ? 'Measures' : 'Dimensions' }}<Ico n="left" /></button>
            <button class="tab"><i class="grip"></i>{{ p ? 'Elements' : 'Content' }}<Ico n="left" /></button>
          </div>
          <div class="bar">
            <button aria-label="View"><Ico n="hier" s="14" /></button><i class="caret"></i>
            <button aria-label="Measures"><Ico n="brief" /></button>
            <button aria-label="Formula" class="fx">fx</button><i class="caret"></i>
            <span class="grow"></span>
            <template v-if="p">
              <button aria-label="Formula folder"><Ico n="fxfold" /></button><i class="caret tight"></i>
              <button aria-label="Clear"><Ico n="boxx" /></button>
            </template>
            <button aria-label="Search"><Ico n="search" /></button>
            <button v-if="p" aria-label="Refresh"><Ico n="cycle" /></button>
          </div>
          <ul class="tree">
            <li v-for="n in trees[k]" :key="n.t" :class="[n.cls, 'l' + n.l]">
              <i class="arr" :class="n.a"></i><span class="slot"><Ico :n="n.i" /></span>{{ n.t }}
            </li>
          </ul>
          <i v-if="!p" class="track"></i>
        </section>
        <ul class="tree content">
          <li v-for="n in content" :key="n.t" :class="'l' + n.l">
            <template v-if="n.i === 'fx'">
              <label class="check"><input type="checkbox" :checked="n.check" /><em class="fx thin">fx</em>{{ n.t }}</label>
            </template>
            <template v-else><i class="arr" :class="n.a"></i><span class="slot"><Ico :n="n.i" /></span>{{ n.t }}</template>
          </li>
        </ul>
      </aside>

      <section class="center">
        <div class="title">
          <div class="crumb"><Ico n="info" />In-Memory DB \ Retail Demo 2023 \ Retail Demo 2023</div>
          <h1>Custom Columns - Avg Sales</h1>
          <div class="acts">
            <button aria-label="Back"><Ico n="back" /></button>
            <button aria-label="Forward"><Ico n="fwd" /></button>
            <button aria-label="Save"><Ico n="save" /></button>
            <button aria-label="Feed"><Ico n="rss" /></button>
            <button aria-label="Print"><Ico n="print" /></button>
            <button class="q">?</button>
            <button aria-label="Close"><Ico n="close" /></button>
          </div>
        </div>
        <div class="stage">
          <div class="tools">
            <template v-for="(t, i) in tools" :key="i">
              <hr v-if="!t" />
              <button v-else :class="{ box: t === 'cursor' || t === 'gridT', more: i > 4 && i < 14 }" :aria-label="t"><Ico :n="t" /></button>
            </template>
          </div>
          <div class="canvas">
            <div class="clip">
              <table>
                <colgroup><col class="c1" /><col class="c2" /><col class="c3" /><col class="c4" /><col class="c5" /><col class="c6" /></colgroup>
                <thead><tr><th v-for="t in heads" :key="t" scope="col">{{ t }}</th></tr></thead>
                <tbody>
                  <tr v-for="(r, i) in rows" :key="r[0]">
                    <td v-if="!i" :rowspan="rows.length" class="maker">Acme</td>
                    <td v-for="(c, j) in r" :key="j" :class="{ prod: !j }">{{ c }}</td>
                  </tr>
                </tbody>
              </table>
              <i class="thumb"></i>
            </div>
          </div>
        </div>
      </section>

      <aside class="drop">
        <div class="phead"><i class="grip"></i><h2>Drop Zones</h2><button class="q">?</button><button aria-label="Collapse"><Ico n="right" /></button></div>
        <div class="zones">
          <section v-for="z in zones" :key="z.t" class="zone" :class="z.kind">
            <div class="zhead"><Ico :n="z.i" /><h3>{{ z.t }}</h3><button class="kebab" aria-label="Options"><i></i><i></i><i></i></button></div>
            <div v-for="c in z.chips" :key="c.t" class="chip" :class="{ marked: c.m }">
              <span class="ci"><Ico :n="c.i" /></span><span class="grow">{{ c.t }}</span><button :aria-label="'Remove ' + c.t"><Ico n="x" /></button>
            </div>
          </section>
          <section v-for="f in folded" :key="f[0]" class="zone shut">
            <div class="zhead"><Ico :n="f[1]" /><h3>{{ f[0] }}</h3><button class="kebab" aria-label="Options"><i></i><i></i><i></i></button></div>
          </section>
        </div>
      </aside>

      <aside class="format">
        <div class="phead"><i class="grip"></i><h2>Formatting Panel</h2><button class="q">?</button><button aria-label="Collapse"><Ico n="right" /></button></div>
        <div class="target">
          <input type="checkbox" checked disabled aria-label="Enabled" />
          <span class="pick framed"><select aria-label="Target"><option>Matrix Grid</option></select></span>
          <button aria-label="Reset"><Ico n="undoS" /></button>
        </div>
        <div class="ftabs">
          <button class="on" aria-label="Text"><Ico n="hashtag" s="18" /></button>
          <button aria-label="Borders"><Ico n="border" /></button>
          <button aria-label="Settings"><Ico n="sliders" s="16" /></button>
        </div>
        <form class="fields" @submit.prevent>
          <div class="row"><label for="ff">Font</label><span class="pick"><select id="ff"><option>Arial</option></select></span></div>
          <div class="row"><label for="fs">Size</label><input id="fs" v-model="fontSize" type="text" /><span class="spin"><i class="u"></i><i class="d"></i></span></div>
          <div class="row style"><span>Style</span>
            <button type="button"><b>B</b></button><button type="button"><b class="it">I</b></button><button type="button"><b class="un">U</b></button>
            <button type="button" class="wide"><span class="ink">A</span><i class="caret pale"></i></button></div>
          <div class="row al"><span>Align</span>
            <button type="button" class="on" aria-label="Left"><Ico n="alL" /></button><button type="button" aria-label="Center"><Ico n="alC" /></button><button type="button" aria-label="Right"><Ico n="alR" /></button><button type="button" aria-label="Auto"><Ico n="alA" /></button></div>
          <div class="row al"><span>Vertical Align</span>
            <button type="button" class="on" aria-label="Top"><Ico n="vaT" /></button><button type="button" aria-label="Middle"><Ico n="vaM" /></button><button type="button" aria-label="Bottom"><Ico n="vaB" /></button></div>
          <div class="row style"><span>Background Color</span><button type="button" class="bg" aria-label="Pick color"><Ico n="bucketS" s="16" /><i class="caret pale"></i></button></div>
        </form>
      </aside>
    </main>

    <footer class="foot">
      <div class="fleft">
        <button aria-label="Menu"><Ico n="burger" /></button>
        <button aria-label="Find"><Ico n="find" /></button>
        <button aria-label="Panes"><Ico n="panes" /></button>
      </div>
      <button class="doc"><span>*</span><Ico n="report" s="16" /><span class="grow">Custom Columns - Avg Sales</span><i class="caret big"></i></button>
      <div class="fright">
        <button aria-label="Add"><Ico n="add" /></button>
        <span class="grow"></span>
        <button aria-label="Pin"><Ico n="pin" /></button><i class="caret"></i>
        <button aria-label="Refresh"><Ico n="spiral" /></button>
        <button aria-label="Timer"><Ico n="timer" /></button>
      </div>
    </footer>

    <div class="menu m1" role="menu">
      <template v-for="m in menu" :key="m.t">
        <button role="menuitem" :class="{ on: m.on, sub: m.sub }"><span class="mi"><Ico :n="m.i" s="16" /></span>{{ m.t }}</button>
        <hr v-if="m.sep" />
      </template>
    </div>
    <div class="menu m2" role="menu">
      <button v-for="m in submenu" :key="m.t" role="menuitem" :class="{ on: m.on, sub: m.sub }"><span class="mi"><Ico :n="m.i" s="14" /></span>{{ m.t }}</button>
    </div>
    <div class="menu m3" role="menu">
      <button v-for="n in 5" :key="n" role="menuitem" :class="{ on: n === 4 }">{{ n }}</button>
    </div>
  </div>
</template>

<style>
body { margin: 0; background: #fff; }
</style>

<style scoped>
* { box-sizing: border-box; }
.app { position: relative; display: flex; flex-direction: column; height: 100vh; overflow: hidden; font: 12px/16px Lato, "Open Sans", sans-serif; color: #3c4044; background: #f1f1f1; }
button { display: inline-flex; align-items: center; justify-content: center; padding: 0; border: 0; background: none; font: inherit; color: inherit; }
h1, h2, h3, ul { margin: 0; padding: 0; font: inherit; list-style: none; }
svg { display: block; flex: none; }
.grow { flex: 1; }
.caret { flex: none; width: 0; height: 0; border: 3px solid transparent; border-top: 5px solid #6d7b87; border-bottom: 0; }
.caret.pale { border-top-color: #a9a9a9; }
.caret.big { border-width: 7px 5px 0; border-top-color: #333; }
.q { width: 16px; font-size: 14px; font-weight: 700; color: #8599a9; }
.fx { font: italic 700 17px/16px "Liberation Serif", serif; color: #f08019; }
.grip { position: absolute; top: 0; left: 50%; width: 40px; height: 2px; margin-left: -20px; background: repeating-linear-gradient(90deg, #8599a9 0 1px, #e4e4e4 1px 2px); }

.ribbon { display: flex; flex: none; height: 94px; border-bottom: 3px solid #d2d5d8; line-height: 14px; }
.logo { width: 94px; border-right: 3px solid #d2d5d8; }
.apps { display: grid; grid-template-columns: 44px 44px; grid-template-rows: 44px 44px; gap: 3px; width: 94px; background: #d2d5d8; border-right: 3px solid #d2d5d8; }
.apps button { background: #f1f1f1; }
.apps .on { background: #dbecfc; }
.group { display: flex; flex-direction: column; border-right: 3px solid #d2d5d8; }
.group.pad .items { padding-left: 5px; }
.group.last { border: 0; }
.group h2 { text-align: center; line-height: 16px; color: #6f7880; }
.items { display: flex; align-items: flex-start; flex: none; height: 75px; }
.items > button { display: block; padding-top: 6px; text-align: center; }
.items > button > svg { margin: 0 auto 9px; }
.items button:disabled { color: #bcbcbc; }
.w52 { width: 52px; } .w56 { width: 56px; } .w62 { width: 62px; } .w64 { width: 64px; } .w66 { width: 66px; }
.w70 { width: 70px; } .w78 { width: 78px; } .w84 { width: 84px; }
.sep { width: 1px; height: 59px; margin-top: 8px; background: #d2d5d8; }
.pair { display: flex; flex-direction: column; gap: 8px; width: 85px; padding: 8px 3px 0; }
.pair button { height: 25px; gap: 6px; justify-content: flex-start; padding-left: 4px; border: 1px solid transparent; }
.pair .run { width: 78px; background: #dbecfc; border-color: #b5d8f5; }
.fonts { display: grid; grid-template-columns: 36px 36px; grid-template-rows: 28px 28px; padding: 8px 0 0 8px; }
.fonts b { font: 700 14px/20px "Liberation Sans", sans-serif; color: #444; }
.fonts .up, .fonts .down { align-self: flex-start; margin-top: 4px; border: 2px solid transparent; border-top: 0; border-bottom: 3px solid #4b93c6; }
.fonts .down { border-top: 3px solid #4b93c6; border-bottom: 0; }
.fonts .caret { margin-left: 6px; margin-right: -2px; }
.fonts .fill svg { box-sizing: content-box; border-bottom: 4px solid #fff; }
.fc span, .ink { width: 14px; border-bottom: 3px solid #808080; font: 14px/14px "Open Sans", sans-serif; color: #808080; text-align: center; }
.fold { margin: 62px 7px 0 auto; height: 32px; }

.work { display: flex; flex: 1; min-height: 0; }
.side { display: flex; flex-direction: column; flex: none; width: 240px; border-right: 3px solid #d2d5d8; background: #fff; }
.pane { position: relative; display: flex; flex-direction: column; border-bottom: 3px solid #d2d5d8; }
.dims { flex: none; height: 506px; overflow: hidden; }
.measures { flex: none; height: 215px; border-bottom: 5px solid #d2d5d8; }
.measures::after { content: ""; position: absolute; left: 93px; bottom: -4px; width: 50px; height: 3px; border: solid #708795; border-width: 1px 0; }
.tabs { display: flex; flex: none; height: 31px; }
.tab { position: relative; flex: 1; justify-content: space-between; padding: 1px 8px 0 8px; background: #e2e2e2; border-bottom: 1px solid #d2d5d8; font-weight: 600; color: #111; }
.tab.on { background: #f1f1f1; border-bottom-color: #f1f1f1; }
.tab + .tab { padding-left: 11px; }
.bar { display: flex; flex: none; align-items: center; gap: 8px; height: 30px; padding: 0 4px 2px 6px; background: #f1f1f1; border-bottom: 1px solid #d2d5d8; }
.bar .caret { margin: 0 0 0 2px; }
.bar .caret.tight { margin: 0; }
.tree { padding: 5px 16px 0 0; white-space: nowrap; }
.measures .tree { padding-top: 2px; }
.tree li { display: flex; align-items: center; height: 24px; padding-left: 12px; }
.tree .l1 { padding-left: 24px; } .tree .l2 { padding-left: 36px; } .tree .l3 { padding-left: 48px; } .tree .l4 { padding-left: 60px; }
.tree .custom { color: #55b4dd; }
.tree .sel { height: 22px; margin: 0 1px 2px 8px; padding-left: 15px; background: #bedafb; border: 1px solid #9fc8f5; }
.arr { flex: none; width: 14px; display: flex; justify-content: center; }
.arr.c::before { content: ""; border: 4px solid transparent; border-left: 5px solid #a9a9a9; border-right: 0; }
.arr.o::before { content: ""; border: 4px solid transparent; border-top: 6px solid #333; border-bottom: 0; }
.slot { flex: none; display: flex; justify-content: center; width: 17px; margin-right: 3px; }
.track { position: absolute; top: 71px; right: 2px; bottom: 10px; width: 8px; background: linear-gradient(#f1f1f1 0 68px, #c1c1c1 68px 240px, #f1f1f1 240px); }
.content { flex: 1; padding-top: 2px; }
.check { display: flex; align-items: center; padding-left: 15px; }
.check .fx { width: 19px; font-size: 19px; font-weight: 400; text-align: center; }
input[type="checkbox"] { appearance: none; flex: none; display: grid; place-content: center; width: 14px; height: 14px; margin: 0 4px 0 0; background: #f4f4f4; border: 1px solid #808080; }
input[type="checkbox"]:checked::before { content: ""; width: 4px; height: 8px; margin-top: -2px; border: solid #667583; border-width: 0 2px 2px 0; transform: rotate(42deg); }

.center { display: flex; flex-direction: column; flex: 1; min-width: 0; border-right: 3px solid #d2d5d8; }
.title { display: flex; align-items: center; flex: none; height: 33px; padding: 0 9px 0 8px; border-bottom: 3px solid #d2d5d8; }
.title h1 { flex: 1; padding-right: 12px; text-align: center; color: #111; }
.crumb { display: flex; align-items: center; gap: 5px; color: #6f7880; }
.acts { display: flex; gap: 12px; }
.stage { display: flex; flex: 1; min-height: 0; }
.tools { display: flex; flex-direction: column; align-items: center; gap: 3px; flex: none; width: 44px; padding: 5px 0; border-right: 4px solid #d2d5d8; overflow: hidden; }
.tools button { position: relative; flex: none; width: 30px; height: 30px; }
.tools .box { background: #fff; border: 1px solid #667583; }
.tools .more::after { content: ""; position: absolute; right: 3px; bottom: 3px; border: solid transparent; border-width: 5px 0 0 5px; border-bottom: 5px solid #8599a9; border-top: 0; }
.tools hr { width: 30px; height: 1px; margin: 2px 0; border: 0; background: #d2d5d8; }
.canvas { flex: 1; display: flex; min-width: 0; padding: 3px 3px 5px; background: #fff; }
.clip { display: flex; align-items: flex-start; gap: 2px; flex: 1; overflow: hidden; }
table { flex: none; table-layout: fixed; width: 938px; border-spacing: 0; border-left: 1px solid #d6d6d6; border-top: 1px solid #d6d6d6; font: 12px/20px "Liberation Sans", Arial, sans-serif; color: #2d2d2d; }
.c1 { width: 102px; } .c2 { width: 321px; } .c3 { width: 157px; } .c4 { width: 94px; } .c5 { width: 86px; }
th, td { padding: 0 3px; border-right: 1px solid #d6d6d6; border-bottom: 1px solid #d0d0d0; text-align: left; vertical-align: top; font-weight: 400; white-space: nowrap; }
th { height: 35px; background: #41aedd; color: #1c2c34; }
.maker, th:first-child { padding-left: 2px; }
.prod, th:nth-child(2) { padding-left: 4px; }
.maker { background: #f2c700; }
.prod { background: #d35427; color: #2b1a14; }
.thumb { width: 11px; height: 17px; margin-top: 35px; background: #c1c1c1; }

.phead { position: relative; display: flex; align-items: center; flex: none; gap: 7px; height: 31px; padding: 1px 8px 0 8px; border-bottom: 1px solid #d2d5d8; }
.phead h2 { flex: 1; font-weight: 600; color: #222; }
.drop { flex: none; width: 355px; border-right: 4px solid #d2d5d8; }
.drop .phead { padding-left: 7px; }
.zones { display: flex; flex-direction: column; gap: 3px; padding: 11px 11px 0 10px; }
.zone { min-height: 90px; padding: 0 6px 17px; background: #fff; border: 1px solid #d6d6d6; }
.zhead { display: flex; align-items: center; height: 28px; margin-bottom: 2px; padding: 0 4px 0 1px; }
.zhead h3 { flex: 1; padding-left: 10px; font-weight: 500; color: #2d3238; }
.kebab { flex-direction: column; gap: 3px; width: 7px; }
.kebab i { width: 3px; height: 3px; background: #8599a9; }
.chip { display: flex; align-items: center; height: 24px; margin-bottom: 4px; padding-right: 5px; border: 1px solid #efb37e; border-radius: 4px; background: #fbd09f; overflow: hidden; }
.chip .ci { display: flex; align-items: center; justify-content: center; width: 20px; height: 24px; margin-right: 3px; padding-top: 2px; }
.orange .marked .ci { background: #f1ad76; }
.blue .chip { border-color: #9fc8f5; background: #bedafb; }
.blue .marked .ci { background: #a0cbf5; }
.zone.shut { position: relative; min-height: 28px; padding-bottom: 0; background: #f1f1f1; }
.shut .zhead { height: 26px; margin: 0; }
.shut h3 { font-weight: 400; }
.shut::after { content: ""; position: absolute; left: 0; bottom: 0; border: solid transparent; border-width: 5px 5px 0 0; border-top: 0; border-bottom: 5px solid #8599a9; }

.format { flex: none; width: 253px; color: #6f7880; }
.target { display: flex; align-items: center; gap: 5px; padding: 8px 14px 0 8px; }
.target input { margin: 0; border-color: #c4c4c4; }
.target input:checked::before { border-color: #c4c4c4; }
.target button { margin-left: 3px; }
.pick { position: relative; flex: 1; }
.pick::after { content: ""; position: absolute; right: 10px; top: 10px; border: 5px solid transparent; border-top: 5px solid #8b8b8b; border-bottom: 0; }
.pick select { appearance: none; display: block; width: 100%; height: 24px; padding: 0 9px; border: 0; border-radius: 0; background: #fff; font: inherit; color: #222; }
.framed select { height: 26px; border: 1px solid #b9b9b9; }
.ftabs { position: relative; display: flex; align-items: center; gap: 8px; margin-top: 20px; padding: 0 8px 7px; border-bottom: 1px solid #c9c9c9; }
.ftabs::after { content: ""; position: absolute; left: 17px; bottom: -6px; width: 9px; height: 9px; background: #f1f1f1; border: solid #c9c9c9; border-width: 1px 0 0 1px; transform: rotate(45deg); }
.ftabs::before { content: ""; position: absolute; z-index: 1; left: 14px; bottom: -8px; width: 16px; height: 7px; background: #f1f1f1; }
.ftabs button { width: 24px; height: 28px; }
.ftabs .on { width: 28px; background: #8599a9; }
.fields { padding: 8px 8px 0; }
.row { display: flex; align-items: center; height: 24px; margin-bottom: 8px; }
.row > :first-child { flex: 1; }
.row .pick { flex: none; width: 157px; }
.row input { width: 70px; height: 22px; padding: 0 4px; border: 1px solid #b9b9b9; background: #fff; font: inherit; color: #555; }
.spin { display: flex; flex-direction: column; align-items: center; gap: 6px; width: 22px; }
.spin i { border: 4px solid transparent; border-top: 0; border-bottom: 4px solid #8599a9; }
.spin .d { border-top: 4px solid #8599a9; border-bottom: 0; }
.style button { width: 24px; height: 24px; margin-left: 6px; background: #fff; color: #444; font: 15px/18px "Open Sans", sans-serif; }
.style .it { font: italic 700 16px/18px "Liberation Serif", serif; }
.style .un { text-decoration: underline; }
.style .wide { width: 45px; gap: 8px; }
.style .ink { border-bottom-color: #444; }
.style .bg { width: 51px; gap: 12px; }
.bg svg { margin-bottom: 8px; }
.al { margin: 6px 0 11px; }
.al button { width: 25px; height: 25px; margin-left: 5px; border: 1px solid transparent; }
.al .on { background: #dbecfc; border-color: #b5d8f5; }

.foot { display: flex; flex: none; height: 40px; padding-top: 3px; background: #fff; }
.fleft, .fright { display: flex; align-items: center; gap: 16px; background: #d2d6d9; border-top: 3px solid #5ab31a; }
.fleft { width: 100px; padding-left: 13px; }
.fright { flex: 1; gap: 10px; padding: 0 9px 0 13px; }
.doc { width: 229px; height: 33px; gap: 4px; padding: 3px 5px 0 7px; border: 3px solid #5ab31a; border-top: 0; border-radius: 0 0 2px 2px; background: #fff; box-shadow: 0 6px #d2d6d9; font-size: 13px; color: #333; white-space: nowrap; }

.menu { position: absolute; padding-top: 1px; background: #fff; border: 1px solid #c9cdd0; box-shadow: 1px 2px 4px #0004; color: #6b7076; }
.menu button { display: flex; justify-content: flex-start; width: 100%; height: 28px; padding: 0 5px; white-space: nowrap; }
.menu .on { background: #dbecfc; color: #43484d; }
.menu .mi { display: flex; justify-content: center; width: 18px; margin-right: 6px; }
.menu hr { height: 1px; margin: 5px 0 7px 28px; border: 0; background: #c4c4c4; }
.menu .sub::after { content: ""; margin-left: auto; border: 4px solid transparent; border-left: 5px solid #444; border-right: 0; }
.m1 { left: 123px; top: 316px; width: 138px; }
.m1 .mi { margin-right: 7px; }
.m2 { left: 259px; top: 511px; width: 105px; }
.m2 .mi { margin-right: 7px; }
.m3 { left: 362px; top: 596px; width: 50px; }
.m3 button { justify-content: flex-end; padding-right: 12px; }
</style>
